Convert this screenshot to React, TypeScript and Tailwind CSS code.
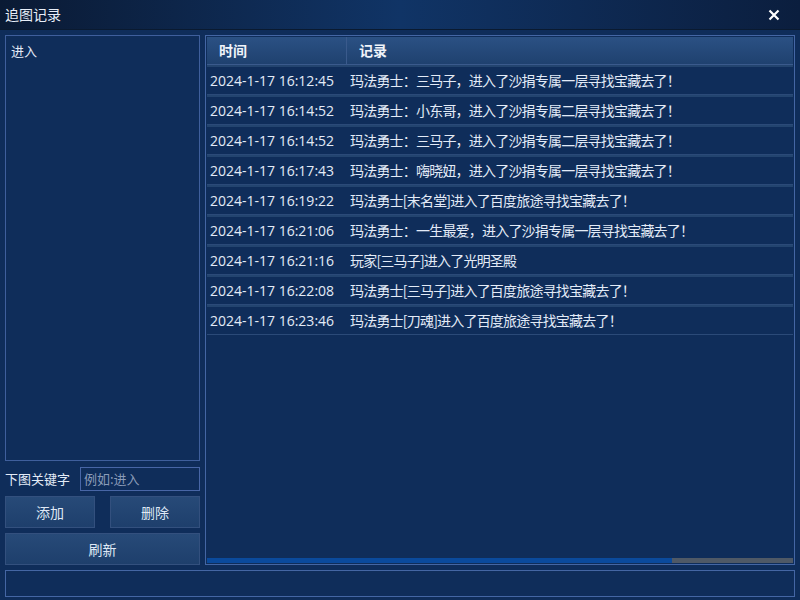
import React from 'react';

const rows: [string, string][] = [
  ['2024-1-17 16:12:45', '玛法勇士：三马子，进入了沙捐专属一层寻找宝藏去了！'],
  ['2024-1-17 16:14:52', '玛法勇士：小东哥，进入了沙捐专属二层寻找宝藏去了！'],
  ['2024-1-17 16:14:52', '玛法勇士：三马子，进入了沙捐专属二层寻找宝藏去了！'],
  ['2024-1-17 16:17:43', '玛法勇士：嗨晓妞，进入了沙捐专属一层寻找宝藏去了！'],
  ['2024-1-17 16:19:22', '玛法勇士[末名堂]进入了百度旅途寻找宝藏去了！'],
  ['2024-1-17 16:21:06', '玛法勇士：一生最爱，进入了沙捐专属一层寻找宝藏去了！'],
  ['2024-1-17 16:21:16', '玩家[三马子]进入了光明圣殿'],
  ['2024-1-17 16:22:08', '玛法勇士[三马子]进入了百度旅途寻找宝藏去了！'],
  ['2024-1-17 16:23:46', '玛法勇士[刀魂]进入了百度旅途寻找宝藏去了！'],
];

const Btn: React.FC<{ label: string, className?: string }> = ({ label, className }) => (
  <button className={`h-[32px] border border-[#33507e] bg-gradient-to-b from-[#274a78] to-[#1e3f6c] text-[14px] text-[#dfe8f5] ${className ?? ''}`}>
    {label}
  </button>
);

export default function App() {
  return (
    <div className="w-[800px] h-[600px] overflow-hidden bg-[#0f2d5a] text-[#e3ebf7] flex flex-col" style={{ fontFamily: '"Noto Sans CJK SC", "Noto Sans", sans-serif' }}>
      {/* title bar */}
      <div className="h-[30px] shrink-0 flex items-center justify-between px-[5px] bg-gradient-to-r from-[#0a1a34] via-[#103466] to-[#0b1e3e] border-b border-[#0a1a30]">
        <span className="text-[14px] text-[#e8eef8]">追图记录</span>
        <svg width="12" height="12" viewBox="0 0 12 12" className="mr-[15px]">
          <path d="M1.5 1.5 L10.5 10.5 M10.5 1.5 L1.5 10.5" stroke="#ffffff" strokeWidth="2.2" />
        </svg>
      </div>

      <div className="flex-1 flex flex-col px-[5px] pt-[5px] pb-[4px] gap-[5px]">
        <div className="flex gap-[5px] h-[530px]">
          {/* left panel */}
          <div className="w-[195px] flex flex-col">
            <div className="h-[427px] border border-[#3f5f9c] px-[5px] pt-[5px] text-[13px]">进入</div>
            <div className="flex items-center mt-[5px] h-[25px]">
              <span className="text-[13px] w-[75px]">下图关键字</span>
              <div className="flex-1 h-[24px] border border-[#4866a6] flex items-center px-[3px] text-[13px] text-[#8a9bb8]">例如:进入</div>
            </div>
            <div className="flex justify-between mt-[5px]">
              <Btn label="添加" className="w-[90px]" />
              <Btn label="删除" className="w-[90px]" />
            </div>
            <Btn label="刷新" className="w-full mt-[5px] text-[13px]" />
          </div>

          {/* table */}
          <div className="flex-1 border border-[#4466a4] flex flex-col p-[1px] h-[530px]">
            <div className="h-[28px] flex bg-gradient-to-b from-[#2b5184] to-[#1f416f] border-b border-[#3a5a8c] text-[14px] font-bold text-[#f0f4fa]">
              <div className="w-[140px] pl-[12px] flex items-center border-r border-[#3a5a8c]">时间</div>
              <div className="pl-[12px] flex items-center">记录</div>
            </div>
            <div className="flex-1 flex flex-col">
              {rows.map(([t, r], i) => (
                <div key={i} className="h-[30px] flex items-center border-t-2 border-b border-t-[#23446f] border-b-[#2b4a78]">
                  <div className="w-[140px] pl-[3px] text-[14px] font-['Open_Sans',sans-serif]">{t}</div>
                  <div className="pl-[3px] text-[14px] tracking-[-0.8px]">{r}</div>
                </div>
              ))}
            </div>
            <div className="h-[5px] flex">
              <div className="w-[465px] bg-[#0a4a9c]" />
              <div className="flex-1 bg-[#4f5966]" />
            </div>
          </div>
        </div>

        {/* status */}
        <div className="h-[27px] border border-[#4466a4]" />
      </div>
    </div>
  );
}
